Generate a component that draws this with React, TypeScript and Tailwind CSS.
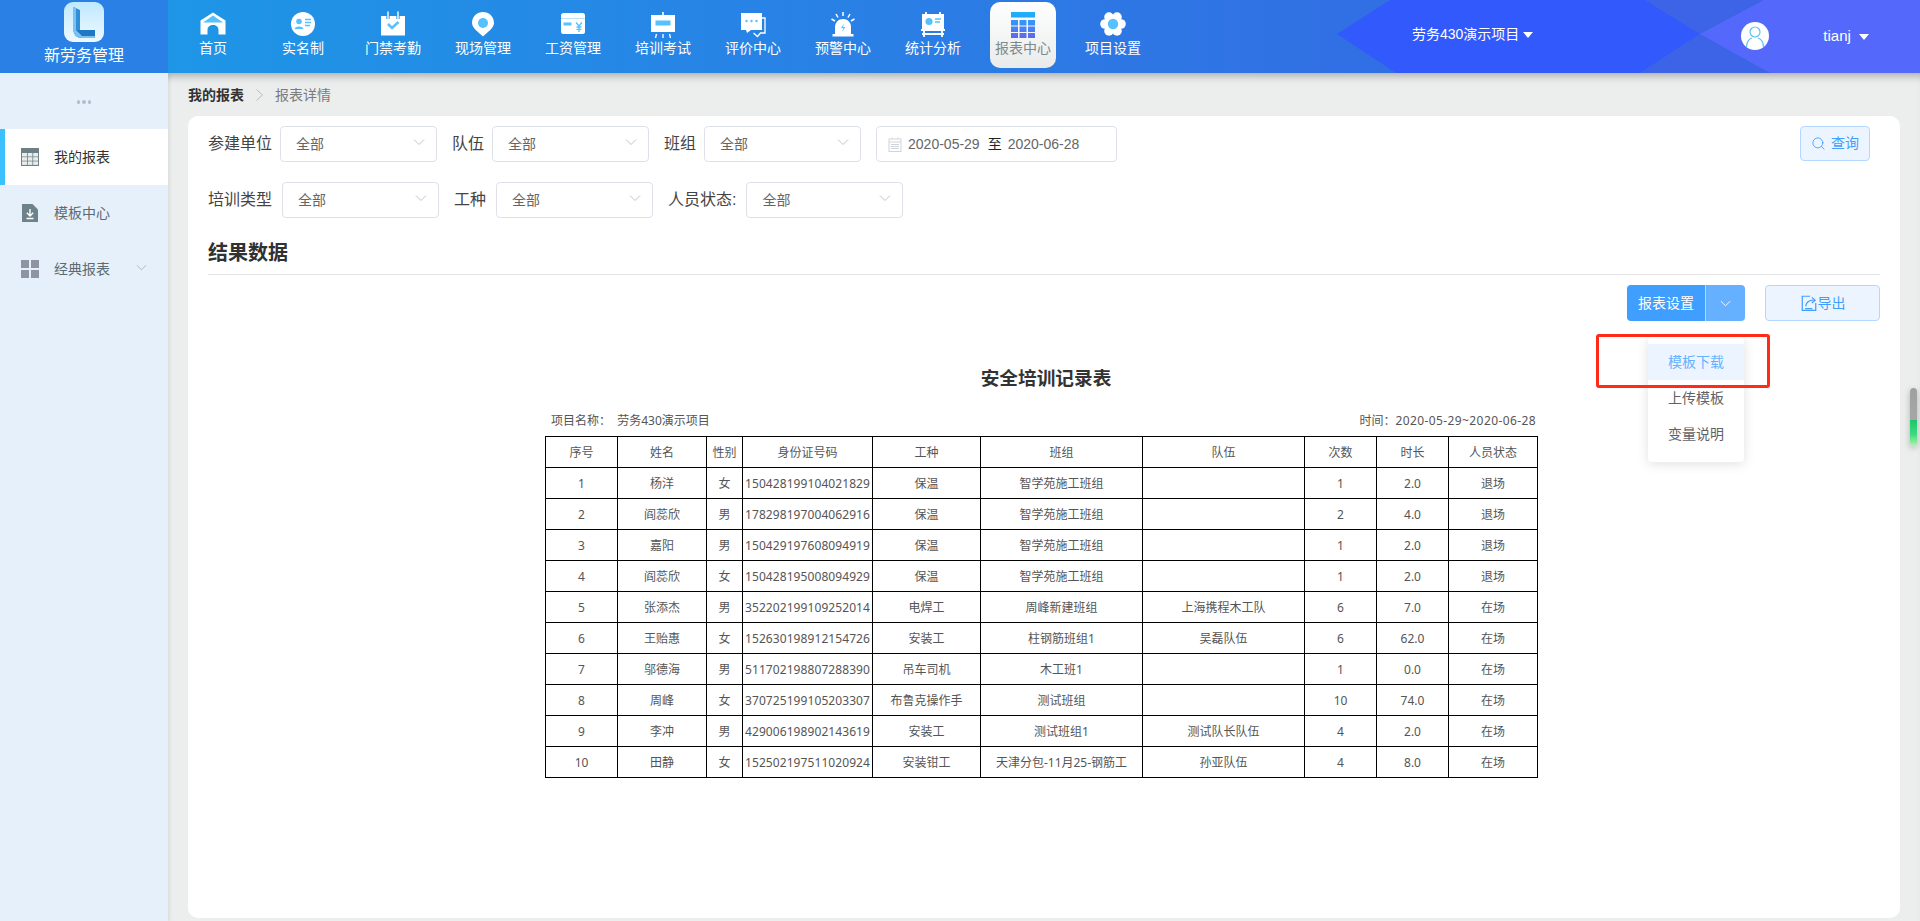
import React from "react";
import { Search } from "lucide-react";

const A = "#57c1ff";

function Home() {
  return (
    <svg width="28" height="28" viewBox="0 0 28 28">
      <path d="M14 2.500 L26.500 10.500 V24.500 H19.500 V20 C19.500 16.500 17 15 14 15 C11 15 8.500 16.500 8.500 20 V24.500 H1.500 V10.500 Z" fill="#fff" />
      <path d="M14 5.500 L24 12.500 H4 Z" fill={A} />
    </svg>
  );
}
function IdCard() {
  return (
    <svg width="28" height="28" viewBox="0 0 28 28">
      <circle cx="14" cy="14" r="12" fill="#fff" />
      <circle cx="10" cy="11.500" r="2.800" fill={A} />
      <path d="M5.500 19 C5.500 15.500 14.500 15.500 14.500 19 Z" fill={A} />
      <path d="M16 9.500 H22 M16 12.500 H22 M16 15.500 H21" stroke={A} strokeWidth="1.400" />
    </svg>
  );
}
function Cal() {
  return (
    <svg width="28" height="28" viewBox="0 0 28 28">
      <path d="M2 6 H26 V25.500 H2 Z" fill="#fff" />
      <path d="M9 2 V9 M19 2 V9" stroke="#1f8fe6" strokeWidth="3.200" />
      <path d="M9 2 V9 M19 2 V9" stroke="#fff" strokeWidth="1.400" strokeLinecap="round" />
      <path d="M9 14 L13 18 L19.500 12" stroke={A} strokeWidth="2.600" fill="none" />
    </svg>
  );
}
function Pin() {
  return (
    <svg width="28" height="28" viewBox="0 0 28 28">
      <path d="M14 26.500 C10 22.500 3 18 3 13 C3 6.500 8 2 14 2 C20 2 25 6.500 25 13 C25 18 18 22.500 14 26.500 Z" fill="#fff" />
      <circle cx="14" cy="13" r="5" fill={A} />
    </svg>
  );
}
function Money() {
  return (
    <svg width="28" height="28" viewBox="0 0 28 28">
      <rect x="2" y="3" width="24" height="21" rx="2.500" fill="#fff" />
      <path d="M2 8.500 H26" stroke="#b9e3fb" strokeWidth="1" />
      <rect x="4.500" y="12.500" width="8" height="3" fill={A} />
      <path d="M17 12.500 L20 16 L23 12.500 M20 16 V22 M17.500 17 H22.500 M17.500 19.300 H22.500" stroke={A} strokeWidth="1.300" fill="none" />
    </svg>
  );
}
function Board() {
  return (
    <svg width="28" height="28" viewBox="0 0 28 28">
      <path d="M14 2 V6" stroke="#fff" strokeWidth="1.600" />
      <rect x="2" y="5" width="24" height="17" fill="#fff" />
      <rect x="6.500" y="10.500" width="15" height="5" fill={A} />
      <path d="M7.500 24 L6.500 28 M14 24 V28 M20.500 24 L21.500 28" stroke="#fff" strokeWidth="1.300" />
    </svg>
  );
}
function Chat() {
  return (
    <svg width="28" height="28" viewBox="0 0 28 28">
      <path d="M23 8 H26 V23 H21.500 L18.500 26.500 L14.500 23" fill="none" stroke="#fff" strokeWidth="1.300" />
      <path d="M2 3 H23 V20 H12 L8 23 L7 20 H2 Z" fill="#fff" />
      <circle cx="7.500" cy="11" r="1.200" fill={A} />
      <circle cx="12.500" cy="11" r="1.200" fill={A} />
      <circle cx="17.500" cy="11" r="1.200" fill={A} />
    </svg>
  );
}
function Alarm() {
  return (
    <svg width="28" height="28" viewBox="0 0 28 28">
      <path d="M6 24 V17 C6 12.500 9.500 9 14 9 C18.500 9 22 12.500 22 17 V24 Z" fill="#fff" />
      <rect x="3.500" y="24" width="21" height="2.500" fill="#fff" />
      <path d="M14 2 V6 M7 4 L9 7.500 M21 4 L19 7.500 M2.500 9 L6 11 M25.500 9 L22 11" stroke="#fff" strokeWidth="1.500" />
      <path d="M15 13.500 L12 18 H14.500 L13 22 L16.500 17 H14 Z" fill={A} />
    </svg>
  );
}
function Stat() {
  return (
    <svg width="28" height="28" viewBox="0 0 28 28">
      <path d="M7 2 V5 M21 2 V5 M5 20 V27 M23 20 V27 M3 24 H25" stroke="#fff" strokeWidth="1.800" />
      <rect x="3" y="4" width="22" height="16" fill="#fff" />
      <path d="M2 20 H26" stroke="#fff" strokeWidth="2" />
      <circle cx="10" cy="11.500" r="3.600" fill={A} />
      <path d="M16 9 H22 M16 12 H21" stroke={A} strokeWidth="1.500" />
    </svg>
  );
}
function Report() {
  const xs = [2, 10.500, 19];
  const ys = [10, 16.500, 23];
  return (
    <svg width="28" height="28" viewBox="0 0 28 28">
      <defs>
        <linearGradient id="rg" x1="0" y1="0" x2="0" y2="1">
          <stop offset="0" stopColor="#1bb2fb" />
          <stop offset="1" stopColor="#6366f1" />
        </linearGradient>
      </defs>
      <clipPath id="rc">
        <path d="M2 2 H26 V7.500 H2 Z" />
        {ys.map((y) =>
          xs.map((x) => <rect key={`${x}-${y}`} x={x} y={y} width="7" height="5.500" />)
        )}
      </clipPath>
      <rect x="2" y="2" width="24" height="26" fill="url(#rg)" clipPath="url(#rc)" />
    </svg>
  );
}
function Gear() {
  const pts = [0, 60, 120, 180, 240, 300].map((d) => {
    const r = (d * Math.PI) / 180;
    return [14 + 8 * Math.cos(r), 14 + 8 * Math.sin(r)];
  });
  return (
    <svg width="28" height="28" viewBox="0 0 28 28">
      {pts.map(([x, y], i) => (
        <circle key={i} cx={x} cy={y} r="4.800" fill="#fff" />
      ))}
      <circle cx="14" cy="14" r="8.500" fill="#fff" />
      <circle cx="14" cy="14" r="5.200" fill={A} />
    </svg>
  );
}

const nav: [string, React.ReactNode][] = [
  ["首页", <Home />],
  ["实名制", <IdCard />],
  ["门禁考勤", <Cal />],
  ["现场管理", <Pin />],
  ["工资管理", <Money />],
  ["培训考试", <Board />],
  ["评价中心", <Chat />],
  ["预警中心", <Alarm />],
  ["统计分析", <Stat />],
  ["报表中心", <Report />],
  ["项目设置", <Gear />],
];

function Chevron({ color = "#c0c4cc", size = 12 }: { color?: string; size?: number }) {
  return (
    <svg width={size} height={size} viewBox="0 0 12 12" fill="none">
      <path d="M1 3.500 L6 8.500 L11 3.500" stroke={color} strokeWidth="1" />
    </svg>
  );
}

function Caret() {
  return <span className="inline-block w-0 h-0 border-l-[5px] border-r-[5px] border-t-[6px] border-l-transparent border-r-transparent border-t-white" />;
}

function Sel() {
  return (
    <div className="w-[157px] h-[36px] border border-[#dfe1ea] rounded-[4px] bg-white flex items-center justify-between pl-[15px] pr-[11px] text-[14px] text-[#666666]">
      <span>全部</span>
      <span className="-mt-[4px]">
        <Chevron />
      </span>
    </div>
  );
}

function Field({ label, gap, first }: { label: string; gap: string; first?: boolean }) {
  return (
    <div className={first ? "flex items-center" : "flex items-center ml-[15px]"}>
      <span className={`text-[16px] text-[#444444] whitespace-nowrap ${gap}`}>{label}</span>
      <Sel />
    </div>
  );
}

const rows: string[][] = [
  ["1", "杨洋", "女", "150428199104021829", "保温", "智学苑施工班组", "", "1", "2.0", "退场"],
  ["2", "阎蕊欣", "男", "178298197004062916", "保温", "智学苑施工班组", "", "2", "4.0", "退场"],
  ["3", "嘉阳", "男", "150429197608094919", "保温", "智学苑施工班组", "", "1", "2.0", "退场"],
  ["4", "阎蕊欣", "女", "150428195008094929", "保温", "智学苑施工班组", "", "1", "2.0", "退场"],
  ["5", "张添杰", "男", "352202199109252014", "电焊工", "周峰新建班组", "上海携程木工队", "6", "7.0", "在场"],
  ["6", "王贻惠", "女", "152630198912154726", "安装工", "柱钢筋班组1", "吴磊队伍", "6", "62.0", "在场"],
  ["7", "邬德海", "男", "511702198807288390", "吊车司机", "木工班1", "", "1", "0.0", "在场"],
  ["8", "周峰", "女", "370725199105203307", "布鲁克操作手", "测试班组", "", "10", "74.0", "在场"],
  ["9", "李冲", "男", "429006198902143619", "安装工", "测试班组1", "测试队长队伍", "4", "2.0", "在场"],
  ["10", "田静", "女", "152502197511020924", "安装钳工", "天津分包-11月25-钢筋工", "孙亚队伍", "4", "8.0", "在场"],
];
const heads = ["序号", "姓名", "性别", "身份证号码", "工种", "班组", "队伍", "次数", "时长", "人员状态"];
const widths = [72, 89, 36, 130, 108, 162, 162, 72, 72, 89];

export default function App() {
  return (
    <div className="w-[1920px] h-[921px] overflow-hidden flex flex-col bg-[#eceeee] [font-family:'Liberation_Sans','Noto_Sans_CJK_SC',sans-serif]">
      <header className="relative z-20 h-[73px] flex shrink-0 text-white bg-[linear-gradient(90deg,#1e96e6_168px,#3170e4_1340px)]">
        <svg className="absolute inset-0" width="1920" height="73" viewBox="0 0 1920 73">
          <polygon points="1390,0 1645,0 1700,34 1640,73 1396,73 1337,34" fill="#3259fb" />
          <polygon points="1645,0 1764,0 1700,34" fill="#3d63e6" />
          <polygon points="1640,73 1770,73 1700,34" fill="#3d63e6" />
          <polygon points="1764,0 1920,0 1920,73 1770,73 1700,34" fill="#5469fb" />
        </svg>
        <div className="relative w-[168px] shrink-0 bg-[#2a80e4] flex flex-col items-center pt-[2px]">
          <div className="w-[40px] h-[40px] rounded-[9px] bg-[linear-gradient(180deg,#bfe9ff,#eef9ff)] flex items-center justify-center">
            <svg width="40" height="40" viewBox="0 0 40 40">
              <path d="M9.500 5 L16 8 V28 H9.500 Z" fill="#2f8fd8" />
              <path d="M9.500 28 H16 L20 28 H31 V36 H18 C13 36 9.500 33 9.500 28 Z" fill="#1f78c4" />
              <path d="M9.500 5 L12 6 V28 L18 34 H31 V36 H18 C13 36 9.500 33 9.500 28 Z" fill="#7cc0ee" />
            </svg>
          </div>
          <div className="text-[16px] leading-[24px] mt-[2px]">新劳务管理</div>
        </div>
        <nav className="relative flex">
          {nav.map(([label, icon]) => {
            const active = label === "报表中心";
            return (
              <div key={label} className="relative w-[90px] flex flex-col items-center pt-[10px]">
                {active && <div className="absolute top-[2px] left-[12px] w-[66px] h-[66px] rounded-[10px] bg-[linear-gradient(180deg,#ffffff,#e9ebeb)]" />}
                <div className="relative h-[28px]">{icon}</div>
                <div className={`relative text-[14px] leading-[20px] whitespace-nowrap ${active ? "text-[#7c8a8e]" : "text-white"}`}>{label}</div>
              </div>
            );
          })}
        </nav>
        <div className="relative flex items-center ml-[254px] pb-[4px] text-[14px] gap-[4px]">
          <span>劳务430演示项目</span>
          <span className="-mt-[2px]">
            <Caret />
          </span>
        </div>
        <div className="relative ml-[208px] flex items-center pb-[1px]">
          <div className="w-[28px] h-[28px] rounded-full bg-white flex items-center justify-center">
            <svg width="24" height="24" viewBox="0 0 24 24" fill="none" stroke="#5cc0f5" strokeWidth="1.200">
              <circle cx="12" cy="8" r="5" />
              <path d="M3.500 23 C3.500 17 7 14.500 9 14 M20.500 23 C20.500 17 17 14.500 15 14" />
            </svg>
          </div>
          <span className="ml-[54px] text-[15px]">tianj</span>
          <span className="ml-[8px] mt-[2px] flex">
            <Caret />
          </span>
        </div>
      </header>

      <div className="flex flex-1 min-h-0">
        <aside className="relative z-10 w-[168px] shrink-0 bg-[#e6f0fb] shadow-[2px_0_4px_rgba(0,0,0,0.06)] text-[14px]">
          <div className="h-[56px] flex items-center justify-center gap-[2px] pt-[2px]">
            <span className="w-[3.500px] h-[3.500px] rounded-full bg-[#b3bdcb]" />
            <span className="w-[3.500px] h-[3.500px] rounded-full bg-[#b3bdcb]" />
            <span className="w-[3.500px] h-[3.500px] rounded-full bg-[#b3bdcb]" />
          </div>
          <div className="h-[56px] bg-white border-l-[5px] border-[#3bc1ff] flex items-center pl-[16px] text-[#333333]">
            <svg width="18" height="18" viewBox="0 0 18 18">
              <rect width="18" height="18" fill="#6c8085" />
              <g fill="#e9ecec">
                <rect x="1" y="5" width="5" height="3.500" />
                <rect x="6.800" y="5" width="4.600" height="3.500" />
                <rect x="12.200" y="5" width="4.800" height="3.500" />
                <rect x="1" y="9.200" width="5" height="3.500" />
                <rect x="6.800" y="9.200" width="4.600" height="3.500" />
                <rect x="12.200" y="9.200" width="4.800" height="3.500" />
                <rect x="1" y="13.400" width="5" height="3.500" />
                <rect x="6.800" y="13.400" width="4.600" height="3.500" />
                <rect x="12.200" y="13.400" width="4.800" height="3.500" />
              </g>
            </svg>
            <span className="ml-[15px]">我的报表</span>
          </div>
          <div className="h-[56px] flex items-center pl-[21px] text-[#5c6b72]">
            <svg width="18" height="18" viewBox="0 0 18 18">
              <path d="M1 0 H11.500 L17 5.500 V18 H1 Z" fill="#6d8289" />
              <path d="M9 5 V11.500 M5.800 8.800 L9 12 L12.200 8.800 M5.500 14.500 H12.500" stroke="#fff" strokeWidth="1.400" fill="none" />
            </svg>
            <span className="ml-[15px]">模板中心</span>
          </div>
          <div className="h-[56px] flex items-center pl-[21px] text-[#5c6b72]">
            <svg width="18" height="18" viewBox="0 0 18 18" fill="#8f94a3">
              <rect width="8" height="8" />
              <rect x="10" width="8" height="8" />
              <rect y="10" width="8" height="8" />
              <rect x="10" y="10" width="8" height="8" />
            </svg>
            <span className="ml-[15px]">经典报表</span>
            <span className="ml-[26px] -mt-[4px]">
              <Chevron color="#aab4c2" size={11} />
            </span>
          </div>
        </aside>

        <main className="relative flex-1 min-w-0 px-[20px] shadow-[inset_0_9px_8px_-6px_rgba(0,0,0,0.28)]">
          <div className="h-[43px] flex items-center text-[14px] pt-[1px]">
            <span className="font-bold text-[#333333]">我的报表</span>
            <svg className="mx-[10px]" width="11" height="14" viewBox="0 0 11 14" fill="none">
              <path d="M2.500 1.500 L8.500 7 L2.500 12.500" stroke="#b8bcc4" />
            </svg>
            <span className="text-[#7b7b7b]">报表详情</span>
          </div>

          <div className="h-[802px] bg-white rounded-[10px] px-[20px] pt-[10px]">
            <div className="flex items-start">
              <Field first label="参建单位" gap="mr-[8px]" />
              <Field label="队伍" gap="mr-[8px]" />
              <Field label="班组" gap="mr-[8px]" />
              <div className="ml-[15px] w-[241px] h-[36px] border border-[#dfe1ea] rounded-[4px] flex items-center pl-[11px] text-[14px] text-[#666666]">
                <svg width="14" height="15" viewBox="0 0 14 15" fill="none" stroke="#cfd3da">
                  <rect x="1" y="2" width="12" height="12.500" />
                  <path d="M1 5 H13 M3 7.500 H11 M3 9.500 H11 M3 11.500 H11 M4 0.500 V2 M10 0.500 V2" />
                </svg>
                <span className="ml-[6px]">2020-05-29</span>
                <span className="ml-[8px] text-[#222222]">至</span>
                <span className="ml-[6px]">2020-06-28</span>
              </div>
              <div className="ml-auto mr-[10px] w-[70px] h-[35px] rounded-[4px] bg-[#ecf5ff] border border-[#b3d8ff] text-[#409eff] text-[14px] flex items-center justify-center gap-[5px]">
                <Search size={15} strokeWidth={1.400} />
                <span>查询</span>
              </div>
            </div>

            <div className="flex items-start mt-[20px]">
              <Field first label="培训类型" gap="mr-[10px]" />
              <Field label="工种" gap="mr-[10px]" />
              <Field label="人员状态:" gap="mr-[10px]" />
            </div>

            <div className="mt-[20px] h-[37px] border-b border-[#e3e4e8] text-[20px] leading-[30px] font-bold text-[#303133]">结果数据</div>

            <div className="relative mt-[10px] flex justify-end gap-[20px]">
              <div className="flex h-[36px] text-white text-[14px]">
                <div className="w-[78px] bg-[#409eff] rounded-l-[4px] flex items-center justify-center">报表设置</div>
                <div className="w-[40px] bg-[#66b1ff] rounded-r-[4px] border-l border-[#b3d8ff] flex items-center justify-center">
                  <Chevron color="#ffffff" size={11} />
                </div>
              </div>
              <div className="w-[115px] h-[36px] rounded-[4px] bg-[#ecf5ff] border border-[#b3d8ff] text-[#409eff] text-[14px] flex items-center justify-center">
                <svg width="18" height="18" viewBox="0 0 16 16" fill="none" stroke="#409eff" strokeWidth="1.100">
                  <path d="M9 2 H2 V14.500 H14 V8" />
                  <path d="M5 11 C5.500 7.500 8 5.500 12 5.500 M10.500 3 L13.500 5.500 L10.500 8" />
                  <path d="M4.500 13 H11" />
                </svg>
                <span>导出</span>
              </div>

              <div className="absolute top-[52px] right-[136px] z-10 w-[96px] h-[125px] bg-white rounded-[4px] pt-[7px] shadow-[0_2px_12px_rgba(0,0,0,0.12)] text-[14px] text-[#606266]">
                <div className="h-[36px] flex items-center justify-center bg-[#ecf5ff] text-[#66b1ff]">模板下载</div>
                <div className="h-[36px] flex items-center justify-center">上传模板</div>
                <div className="h-[36px] flex items-center justify-center">变量说明</div>
              </div>
              <div className="absolute top-[49px] right-[110px] z-20 w-[174px] h-[54px] border-[3px] border-[#ff2a17] rounded-[3px]" />
            </div>

            <div className="mt-[46px] h-[24px] pl-[4px] text-center text-[18.670px] leading-[24px] font-bold text-[#333333]">安全培训记录表</div>

            <div className="w-[992px] ml-[337px] [font-family:'Noto_Sans','Noto_Sans_CJK_SC',sans-serif] text-[12px] text-[#555555]">
              <div className="mt-[22px] h-[16px] leading-[16px] flex justify-between pl-[6px] pr-[1px]">
                <span>项目名称：&nbsp;&nbsp;劳务430演示项目</span>
                <span>
                  时间：<span className="tracking-[0.4px]">2020-05-29~2020-06-28</span>
                </span>
              </div>
              <table className="mt-[7px] w-[992px] table-fixed border-collapse border border-black">
                <colgroup>
                  {widths.map((w, i) => (
                    <col key={i} style={{ width: w }} />
                  ))}
                </colgroup>
                <tbody>
                  <tr className="h-[31px]">
                    {heads.map((h) => (
                      <td key={h} className="border border-black text-center p-0 pt-[1px] whitespace-nowrap">{h}</td>
                    ))}
                  </tr>
                  {rows.map((r) => (
                    <tr key={r[0]} className="h-[31px]">
                      {r.map((c, i) => (
                        <td key={i} className={`border border-black text-center p-0 pt-[1px] whitespace-nowrap ${i === 3 ? "tracking-[0.08px]" : ""}`}>{c}</td>
                      ))}
                    </tr>
                  ))}
                </tbody>
              </table>
            </div>
          </div>

          <div className="absolute top-[315px] left-[1742px] w-[7px] h-[58px] rounded-full overflow-hidden shadow-[0_2px_6px_rgba(0,0,0,0.25)] bg-[linear-gradient(180deg,#9f9f9f_0,#a5a7a6_55%,#1fc76b_56%,#3fd97f_80%,#b0f3a6_100%)]" />
        </main>
      </div>
    </div>
  );
}
